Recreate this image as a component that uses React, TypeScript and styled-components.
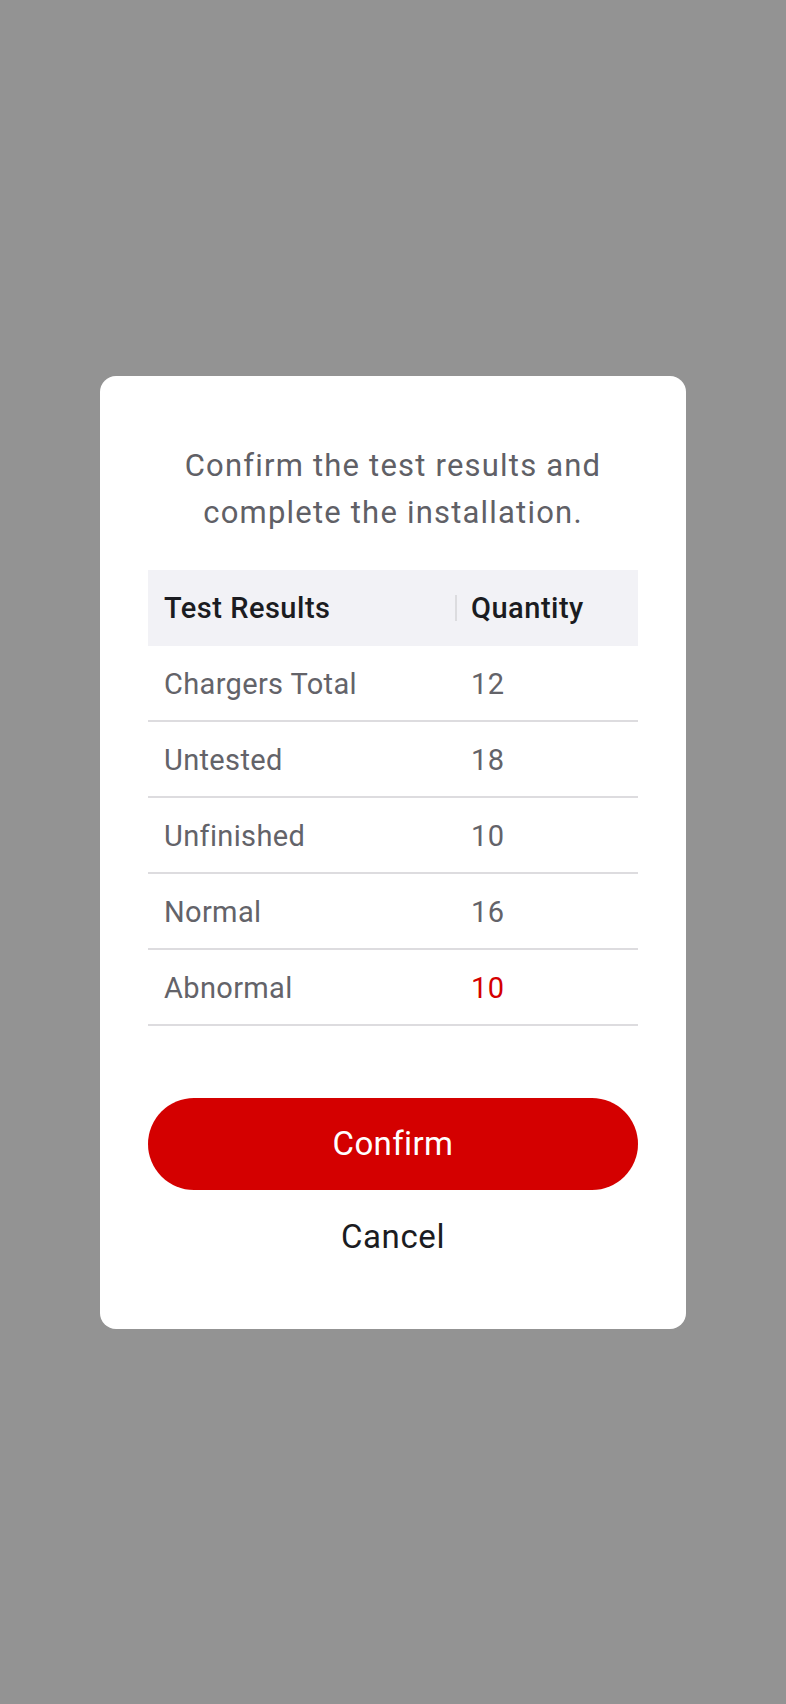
import React from "react";
import styled, { createGlobalStyle } from "styled-components";

const Global = createGlobalStyle`
  html, body {
    margin: 0;
    padding: 0;
    background: #939393;
  }
  body {
    font-family: Roboto, "Noto Sans", "Liberation Sans", sans-serif;
    -webkit-font-smoothing: antialiased;
  }
`;

const Overlay = styled.div`
  width: 100%;
  height: 100vh;
  display: flex;
  align-items: center;
  justify-content: center;
  background: #939393;
`;

const Dialog = styled.div`
  width: 586px;
  box-sizing: border-box;
  background: #ffffff;
  border-radius: 16px;
  padding: 66px 48px 70px;
  display: flex;
  flex-direction: column;
`;

const Title = styled.p`
  margin: 0 0 34px;
  text-align: center;
  font-size: 31px;
  line-height: 47px;
  color: #606066;
  letter-spacing: 1.2px;
`;

const Table = styled.div`
  display: flex;
  flex-direction: column;
`;

const HeaderRow = styled.div`
  display: grid;
  grid-template-columns: 307px 1fr;
  height: 76px;
  align-items: center;
  background: #f2f2f6;
`;

const HeaderCell = styled.div<{ $divider?: boolean }>`
  position: relative;
  padding-left: 16px;
  font-size: 29px;
  font-weight: 500;
  color: #1b1c21;
  letter-spacing: 0.5px;
  ${(p) =>
    p.$divider &&
    `
    &::before {
      content: "";
      position: absolute;
      left: 0;
      top: 50%;
      transform: translateY(-50%);
      width: 2px;
      height: 26px;
      background: #dcdcdf;
    }
  `}
`;

const Row = styled.div`
  display: grid;
  grid-template-columns: 307px 1fr;
  height: 76px;
  box-sizing: border-box;
  align-items: center;
  border-bottom: 2px solid #dddcdf;
`;

const Cell = styled.div<{ $alert?: boolean }>`
  padding-left: 16px;
  padding-top: 3px;
  font-size: 29px;
  letter-spacing: 0.35px;
  color: ${(p) => (p.$alert ? "#d40000" : "#636369")};
`;

const ConfirmButton = styled.button`
  margin-top: 72px;
  height: 92px;
  width: 100%;
  border: none;
  border-radius: 46px;
  background: #d40000;
  color: #ffffff;
  font-family: inherit;
  font-size: 33px;
  letter-spacing: 0.4px;
  cursor: pointer;
`;

const CancelButton = styled.button`
  margin-top: 25px;
  height: 44px;
  border: none;
  background: transparent;
  color: #1b1c21;
  font-family: inherit;
  font-size: 33px;
  letter-spacing: 0.6px;
  cursor: pointer;
`;

const rows = [
  { label: "Chargers Total", value: "12" },
  { label: "Untested", value: "18" },
  { label: "Unfinished", value: "10" },
  { label: "Normal", value: "16" },
  { label: "Abnormal", value: "10", alert: true },
];

export default function App() {
  return (
    <>
      <Global />
      <Overlay>
        <Dialog>
          <Title>
            Confirm the test results and
            <br />
            complete the installation.
          </Title>
          <Table>
            <HeaderRow>
              <HeaderCell>Test Results</HeaderCell>
              <HeaderCell $divider>Quantity</HeaderCell>
            </HeaderRow>
            {rows.map((r) => (
              <Row key={r.label}>
                <Cell>{r.label}</Cell>
                <Cell $alert={r.alert}>{r.value}</Cell>
              </Row>
            ))}
          </Table>
          <ConfirmButton>Confirm</ConfirmButton>
          <CancelButton>Cancel</CancelButton>
        </Dialog>
      </Overlay>
    </>
  );
}
